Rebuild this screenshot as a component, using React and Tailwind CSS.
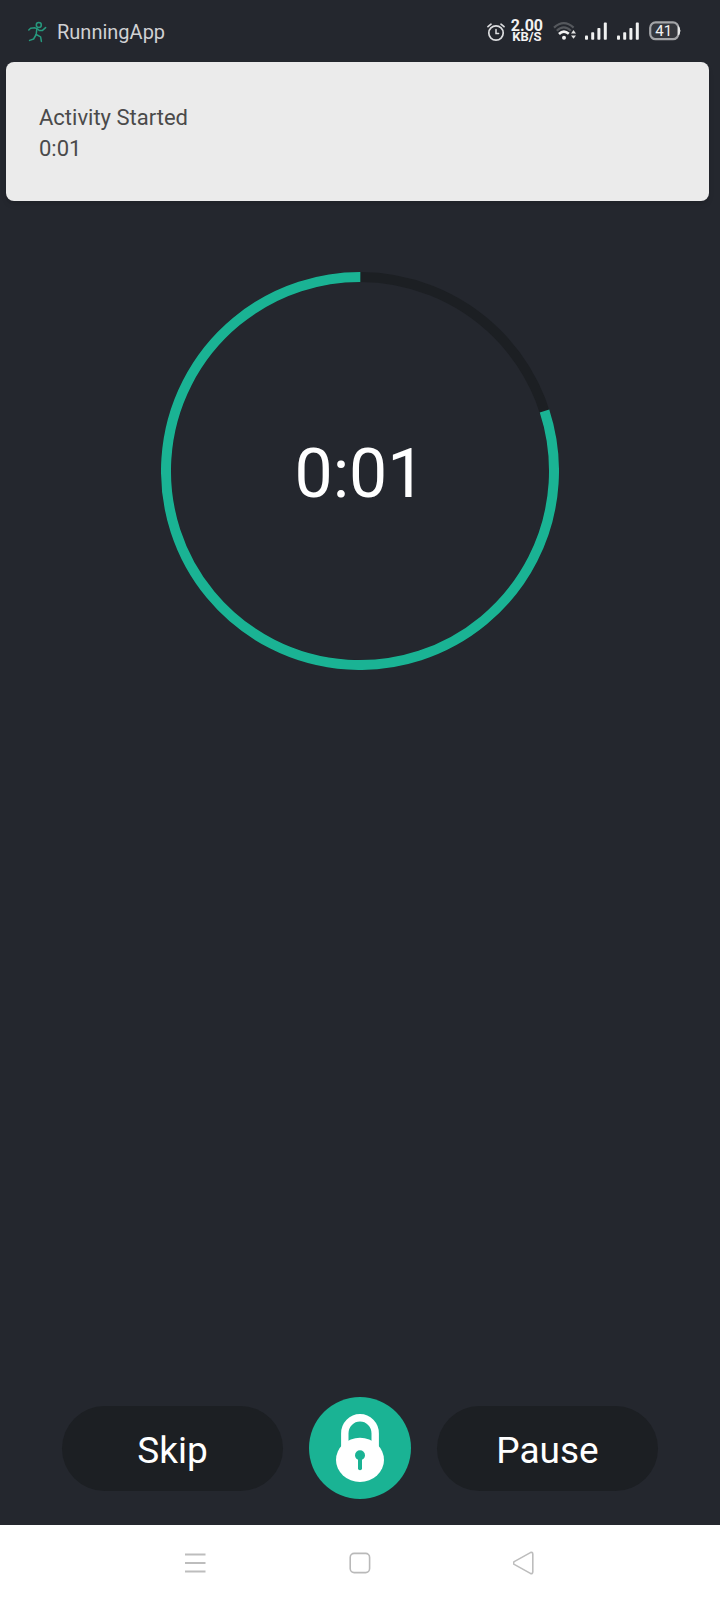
import React from "react";

function RunnerIcon() {
  return (
    <svg width="20" height="22" viewBox="0 0 20 22" fill="none" stroke="#27997e" strokeWidth="1.5" strokeLinecap="round" strokeLinejoin="round" aria-hidden="true">
      <circle cx="10.8" cy="4" r="2.5" />
      <path d="M0.8 9 L2.6 7.2 L7 6.8 L9.4 8 L11.5 9.6 L14.5 9.4 L17.6 6.6" />
      <path d="M8.8 8 L8.2 13.5" />
      <path d="M8.2 13.5 L5.6 18 L1.6 19.4" />
      <path d="M8.2 13.5 L12.6 15.8 L13.4 20.4" />
    </svg>
  );
}

function AlarmIcon() {
  return (
    <svg width="18" height="22" viewBox="0 -2 18 22" fill="none" stroke="#dcdddf" strokeWidth="1.7" strokeLinecap="round" aria-hidden="true">
      <circle cx="9" cy="11" r="7.2" />
      <path d="M1 4.6 L4 2.2 M17 4.6 L14 2.2" />
      <path d="M9 7.6 V11.6 H11.6" strokeWidth="1.5" />
    </svg>
  );
}

function WifiIcon() {
  return (
    <svg width="24" height="20" viewBox="0 0 24 20" fill="none" aria-hidden="true">
      <path d="M1 6.6 Q10.8 -2.4 20.6 6.6" stroke="#55585d" strokeWidth="2.2" />
      <path d="M3.8 9.8 Q10.8 3 17.8 9.8" stroke="#55585d" strokeWidth="2.2" />
      <path d="M6 13 Q10.8 8.4 15.8 12.8" stroke="#f2f2f2" strokeWidth="2.6" />
      <circle cx="11" cy="16.8" r="2" fill="#f2f2f2" />
      <path d="M18 12.4 L20.5 9 L23 12.4 Z M18 14.4 L20.5 17.8 L23 14.4 Z" fill="#e2e2e2" />
    </svg>
  );
}

function SignalIcon() {
  return (
    <svg width="22" height="18" viewBox="0 0 22 18" fill="#f0f1f1" aria-hidden="true">
      <rect x="0" y="13.4" width="3" height="4.4" rx="0.8" />
      <rect x="6.2" y="10.2" width="3" height="7.6" rx="0.8" />
      <rect x="12.4" y="6" width="3" height="11.8" rx="0.8" />
      <rect x="18.8" y="0.6" width="3" height="17.2" rx="0.8" />
    </svg>
  );
}

function Battery({ level }) {
  return (
    <svg width="32" height="20" viewBox="0 0 32 20" role="img" aria-label={`Battery ${level}%`}>
      <rect x="1.2" y="1.4" width="28.2" height="16.8" rx="5.4" fill="#34373d" stroke="#a3a5a8" strokeWidth="2.2" />
      <path d="M29.6 5.6 Q32.4 9.8 29.6 14 Z" fill="#e9eaea" stroke="#e9eaea" strokeWidth="1" />
      <text x="14.8" y="15.4" textAnchor="middle" fontSize="15" fill="#f2f2f2">{level}</text>
    </svg>
  );
}

function StatusBar() {
  return (
    <header className="flex h-[62px] items-center justify-between pl-7 pr-[39px]">
      <div className="flex items-center gap-[9px] pt-0.5">
        <RunnerIcon />
        <span className="text-xl leading-6 text-[#d0d1d3]">RunningApp</span>
      </div>
      <div className="flex items-center">
        <AlarmIcon />
        <div className="ml-1.5 flex flex-col items-center font-bold text-[#f2f2f2]">
          <span className="text-base leading-[12px]">2.00</span>
          <span className="text-[13px] leading-[10px]">KB/S</span>
        </div>
        <div className="ml-2.5 mr-2 flex">
          <WifiIcon />
        </div>
        <div className="flex items-center gap-2.5">
          <SignalIcon />
          <SignalIcon />
          <Battery level={41} />
        </div>
      </div>
    </header>
  );
}

function ActivityCard({ time }) {
  return (
    <section className="ml-1.5 mr-[11px] rounded-lg bg-[#ebebeb] px-[33px] pb-[37px] pt-10 text-[22px] leading-[31px] text-[#4a4a4a] shadow-md">
      <p>Activity Started</p>
      <p>{time}</p>
    </section>
  );
}

function TimerRing({ time, elapsed }) {
  const radius = 194;
  const length = 2 * Math.PI * radius;
  return (
    <div className="mx-auto mt-[71px] grid w-full max-w-[398px] place-items-center">
      <svg viewBox="0 0 398 398" className="col-start-1 row-start-1 w-full" fill="none" strokeWidth="10" aria-hidden="true">
        <circle cx="199" cy="199" r={radius} stroke="#1c1f23" />
        <circle
          cx="199"
          cy="199"
          r={radius}
          stroke="#1ab394"
          strokeDasharray={`${length * (1 - elapsed)} ${length}`}
          transform={`rotate(${-90 + elapsed * 360} 199 199)`}
        />
      </svg>
      <time className="col-start-1 row-start-1 pt-1.5 text-[68px] leading-[80px] text-white">{time}</time>
    </div>
  );
}

function PillButton({ children }) {
  return (
    <button type="button" className="h-[85px] max-w-[221px] flex-1 rounded-full bg-[#1c1f23] pt-1.5 text-[37px] leading-[42px] text-white">
      {children}
    </button>
  );
}

function LockButton() {
  return (
    <button type="button" aria-label="Lock" className="size-[102px] shrink-0 rounded-full bg-[#1ab394]">
      <svg viewBox="0 0 102 102" className="size-full" aria-hidden="true">
        <path d="M35.8 52 V36.4 A15.2 15.6 0 0 1 66.2 36.4 V52" fill="none" stroke="#fff" strokeWidth="7.4" />
        <ellipse cx="51" cy="62.9" rx="24" ry="22.1" fill="#fff" />
        <circle cx="51" cy="58.2" r="5" fill="#1ab394" />
        <path d="M51 59 V71.2" stroke="#1ab394" strokeWidth="4" strokeLinecap="round" />
      </svg>
    </button>
  );
}

function NavBar() {
  return (
    <nav className="flex h-[75px] items-center justify-center gap-[142px] bg-white pt-px">
      <button type="button" aria-label="Recent apps">
        <svg width="22" height="22" viewBox="0 0 22 22" stroke="#bdbdbd" strokeWidth="2" aria-hidden="true">
          <path d="M0 2.5 H20.5 M0 11 H20.5 M0 19.5 H20.5" />
        </svg>
      </button>
      <button type="button" aria-label="Home">
        <svg width="22" height="22" viewBox="0 0 22 22" fill="none" stroke="#b9b9b9" strokeWidth="1.6" aria-hidden="true">
          <rect x="1.2" y="1.4" width="19.4" height="19.2" rx="4" />
        </svg>
      </button>
      <button type="button" aria-label="Back">
        <svg width="22" height="24" viewBox="0 0 22 24" fill="none" stroke="#bdbdbd" strokeWidth="1.6" strokeLinejoin="round" aria-hidden="true">
          <path d="M1.2 10.6 L17.4 1.6 Q19.6 0.8 19.8 3 V21 Q19.6 23.2 17.4 22.4 L1.2 13.4 Q-0.2 12 1.2 10.6 Z" />
        </svg>
      </button>
    </nav>
  );
}

export default function App() {
  return (
    <div className="flex min-h-screen flex-col bg-[#24272e] font-[Roboto,sans-serif]">
      <StatusBar />
      <main className="flex flex-1 flex-col">
        <ActivityCard time="0:01" />
        <TimerRing time="0:01" elapsed={0.2} />
        <div className="mt-auto flex items-center justify-center gap-[26px] px-6 pb-[26px] pt-10">
          <PillButton>Skip</PillButton>
          <LockButton />
          <PillButton>Pause</PillButton>
        </div>
      </main>
      <NavBar />
    </div>
  );
}
